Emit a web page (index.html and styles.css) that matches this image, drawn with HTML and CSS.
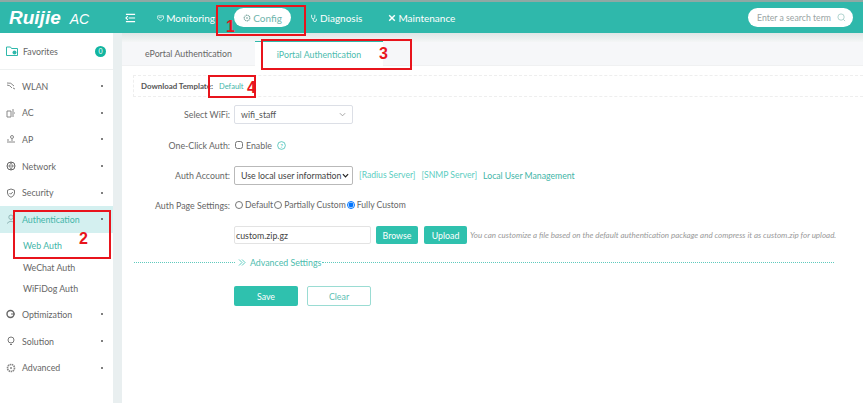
FILE: index.html
```html
<!DOCTYPE html>
<html lang="en">
<head>
    <meta charset="UTF-8">
    <meta name="viewport" content="width=device-width, initial-scale=1.0">
    <title>Ruijie AC - Web Auth</title>
    <link rel="stylesheet" href="styles.css">
</head>
<body>
    <header class="topbar">
        <div class="logo"><span class="logo-name">Ruijie</span><span class="logo-ac">AC</span></div>
        <svg class="menu-icon" viewBox="0 0 12 10"><path d="M1 1h10M4 5h7M1 9h10M3 3L1 5l2 2" fill="none" stroke="#fff" stroke-width="1.2"/></svg>
        <nav class="nav">
            <a class="nav-item nav-monitoring"><svg viewBox="0 0 10 10"><path d="M1 2h8v4l-4 3-4-3zM3 5l1.500-1.500 1 1L7 3" fill="none" stroke="#fff"/></svg>Monitoring</a>
            <a class="nav-item nav-active"><svg viewBox="0 0 10 10"><circle cx="5" cy="5" r="3.500" fill="none" stroke="#7fa8a2" stroke-width="1.500" stroke-dasharray="1.500 .6"/><circle cx="5" cy="5" r="1.200" fill="#9dbdb8"/></svg>Config</a>
            <a class="nav-item nav-diagnosis"><svg viewBox="0 0 10 10"><path d="M2 1v3a2 2 0 0 0 4 0V1M4 6v1.500a2 2 0 0 0 4 0V6" fill="none" stroke="#fff"/></svg>Diagnosis</a>
            <a class="nav-item nav-maintenance"><svg viewBox="0 0 10 10"><path d="M1.500 1.500l7 7M8.500 1.500l-7 7" stroke="#fff" stroke-width="1.800"/></svg>Maintenance</a>
        </nav>
        <div class="search">
            <span>Enter a search term</span>
            <svg viewBox="0 0 10 10"><circle cx="4.500" cy="4.500" r="3.500" fill="none" stroke="#a9cfca"/><path d="M7 7l2 2" stroke="#a9cfca"/></svg>
        </div>
    </header>

    <div class="layout">
        <aside class="sidebar">
            <div class="favorites">
                <svg class="side-icon fav-icon" viewBox="0 0 12 10"><path d="M.5 1h4l1 1.500h6V9.500H.5z" fill="none" stroke="#2fb8ab"/><circle cx="8.500" cy="6.500" r="2" fill="#2fb8ab"/></svg>
                <span>Favorites</span>
                <b class="badge">0</b>
            </div>
            <ul class="menu">
                <li class="menu-item"><svg class="side-icon" viewBox="0 0 10 10"><path d="M1 2q4-1 7 3M1 4q3 0 5 3M7 7l2 1" fill="none" stroke="#888"/></svg>WLAN<i class="dot"></i></li>
                <li class="menu-item"><svg class="side-icon" viewBox="0 0 10 10"><path d="M1 3h4v6H1zM7 1v3M7 6v3M6 5h3" fill="none" stroke="#888"/></svg>AC<i class="dot"></i></li>
                <li class="menu-item"><svg class="side-icon" viewBox="0 0 10 10"><circle cx="6" cy="3" r="1.500" fill="none" stroke="#888"/><path d="M6 5v2M1 8h8M1 6h2" fill="none" stroke="#888"/></svg>AP<i class="dot"></i></li>
                <li class="menu-item"><svg class="side-icon" viewBox="0 0 10 10"><circle cx="5" cy="5" r="4" fill="none" stroke="#666"/><path d="M1 5h8M5 1q-3 4 0 8M5 1q3 4 0 8" fill="none" stroke="#666" stroke-width=".7"/></svg>Network<i class="dot"></i></li>
                <li class="menu-item"><svg class="side-icon" viewBox="0 0 10 10"><path d="M5 1l3.500 1.200V5Q8.500 8 5 9.300 1.500 8 1.500 5V2.200zM3.500 5l1.200 1.200L6.800 4" fill="none" stroke="#777"/></svg>Security<i class="dot"></i></li>
                <li class="menu-item menu-open"><svg class="side-icon" viewBox="0 0 10 10"><circle cx="5" cy="3.200" r="2.200" fill="none" stroke="#8fb5b5"/><path d="M1 9.500q4-4.500 8 0" fill="none" stroke="#8fb5b5"/></svg>Authentication<i class="dot"></i></li>
                <li class="sub-item sub-active">Web Auth</li>
                <li class="sub-item">WeChat Auth</li>
                <li class="sub-item sub-last">WiFiDog Auth</li>
                <li class="menu-item"><svg class="side-icon" viewBox="0 0 10 10"><circle cx="4.500" cy="5" r="3.500" fill="none" stroke="#666" stroke-width="1.400"/><path d="M5 5h4" stroke="#666"/></svg>Optimization<i class="dot"></i></li>
                <li class="menu-item"><svg class="side-icon" viewBox="0 0 10 10"><circle cx="5" cy="4" r="3" fill="none" stroke="#777"/><path d="M4 8.500h2" stroke="#777"/></svg>Solution<i class="dot"></i></li>
                <li class="menu-item"><svg class="side-icon" viewBox="0 0 10 10"><circle cx="5" cy="5" r="3.500" fill="none" stroke="#888" stroke-width="1.600" stroke-dasharray="1.500 .6"/><circle cx="5" cy="5" r="1" fill="#888"/></svg>Advanced<i class="dot"></i></li>
            </ul>
        </aside>

        <main class="content">
            <div class="tabs">
                <div class="tab">ePortal Authentication</div>
                <div class="tab tab-active">iPortal Authentication</div>
            </div>
            <div class="panel">
                <div class="download-bar">
                    <b>Download Template:</b>
                    <a class="link">Default</a>
                </div>

                <div class="form-row row-wifi">
                    <label>Select WiFi:</label>
                    <div class="fake-select">wifi_staff<svg viewBox="0 0 8 5"><path d="M1 1l3 3 3-3" fill="none" stroke="#999"/></svg></div>
                </div>
                <div class="form-row row-oneclick">
                    <label>One-Click Auth:</label>
                    <input type="checkbox" class="check">
                    <span>Enable</span>
                    <svg class="help" viewBox="0 0 10 10"><circle cx="5" cy="5" r="4.300" fill="none" stroke="#2fb8ab" stroke-width=".8"/><text x="5" y="7.400" font-size="6.500" text-anchor="middle" fill="#2fb8ab">?</text></svg>
                </div>
                <div class="form-row row-account">
                    <label>Auth Account:</label>
                    <div class="fake-select account-select">Use local user information<svg viewBox="0 0 8 5"><path d="M1 1l3 3 3-3" fill="none" stroke="#222" stroke-width="1.400"/></svg></div>
                    <a class="link server-link">[Radius Server]</a>
                    <a class="link server-link">[SNMP Server]</a>
                    <a class="link local-link">Local User Management</a>
                </div>
                <div class="form-row row-page">
                    <label>Auth Page Settings:</label>
                    <input type="radio" name="page" class="radio"><span>Default</span>
                    <input type="radio" name="page" class="radio"><span>Partially Custom</span>
                    <input type="radio" name="page" class="radio" checked><span>Fully Custom</span>
                </div>
                <div class="form-row row-file">
                    <label></label>
                    <div class="file-input">custom.zip.gz</div>
                    <button class="btn btn-browse">Browse</button>
                    <button class="btn btn-upload">Upload</button>
                    <em class="hint">You can customize a file based on the default authentication package and compress it as custom.zip for upload.</em>
                </div>

                <div class="advanced">
                    <i class="dots dots-left"></i>
                    <svg viewBox="0 0 8 7"><path d="M1 .5l3 3-3 3M4 .5l3 3-3 3" fill="none" stroke="#35bfb0" stroke-width=".8"/></svg>
                    <span>Advanced Settings</span>
                    <i class="dots dots-right"></i>
                </div>

                <div class="form-row row-actions">
                    <label></label>
                    <button class="btn btn-save">Save</button>
                    <button class="btn btn-clear">Clear</button>
                </div>
            </div>
        </main>
    </div>

    <!-- Red callouts drawn over the screenshot -->
    <div class="callout callout-1"><span>1</span></div>
    <div class="callout callout-2"><span>2</span></div>
    <div class="callout callout-3"><span>3</span></div>
    <div class="callout callout-4"><span>4</span></div>
</body>
</html>
```

FILE: styles.css
```css
* {
    box-sizing: border-box;
}

body {
    margin: 0;
    width: 863px;
    height: 403px;
    overflow: hidden;
    position: relative;
    font-family: Lato, "Open Sans", Arial, sans-serif;
    font-size: 8.8px;
    color: #666;
    background-color: #e9eff0;
}

/* Top bar */
.topbar {
    height: 33px;
    border-top: 2px solid #8fa8a4;
    background-color: #2fb8ab;
    display: flex;
    align-items: center;
    color: #fff;
}

.logo {
    width: 125px;
    padding-left: 9px;
    display: flex;
    align-items: baseline;
    color: #fff;
    font-family: "Liberation Sans", Arial, sans-serif;
    font-style: italic;
}

.logo-name {
    font-size: 19px;
    font-weight: bold;
}

.logo-ac {
    margin-left: 9px;
    font-size: 14px;
}

.menu-icon {
    width: 11px;
    height: 10px;
}

.nav {
    display: flex;
    align-items: center;
    margin-left: 21px;
    font-size: 10px;
}

.nav-item {
    display: flex;
    align-items: center;
    gap: 2px;
    height: 19px;
}

.nav-item svg {
    width: 8px;
    height: 8px;
}

.nav-monitoring {
    width: 58px;
}

.nav-active {
    width: 57px;
    margin-left: 19px;
    justify-content: center;
    border-radius: 10px;
    background-color: #fff;
    color: #6fb5ad;
}

.nav-diagnosis {
    margin-left: 19px;
}

.nav-maintenance {
    margin-left: 26px;
}

.search {
    margin-left: auto;
    margin-right: 10px;
    width: 105px;
    height: 19px;
    padding: 0 7px 0 9px;
    border-radius: 10px;
    background-color: #fff;
    color: #9aa5a4;
    font-size: 8.7px;
    display: flex;
    align-items: center;
    justify-content: space-between;
}

.search svg {
    width: 9px;
    height: 9px;
}

.layout {
    display: flex;
    height: 370px;
}

/* Sidebar */
.sidebar {
    width: 113px;
    flex-shrink: 0;
    background-color: #fff;
}

.favorites {
    height: 37px;
    padding: 0 7px 0 6px;
    display: flex;
    align-items: center;
    border-bottom: 1px solid #eef1f1;
}

.fav-icon {
    width: 12px;
    height: 10px;
    margin-right: 5px;
}

.badge {
    margin-left: auto;
    width: 11px;
    height: 11px;
    line-height: 11px;
    border-radius: 50%;
    background-color: #12b5a0;
    color: #fff;
    font-size: 7px;
    font-weight: normal;
    text-align: center;
}

.menu {
    list-style: none;
    margin: 3px 0 0;
    padding: 0;
}

.menu-item {
    height: 26.6px;
    padding: 0 10px 0 6px;
    display: flex;
    align-items: center;
    color: #666;
}

.side-icon {
    width: 10px;
    height: 10px;
    margin-right: 6px;
    flex-shrink: 0;
}

.fav-icon.side-icon {
    width: 12px;
    margin-right: 5px;
}

.dot {
    margin-left: auto;
    width: 2px;
    height: 2px;
    border-radius: 50%;
    background-color: #555;
}

.menu-open {
    background-color: #d4f0f0;
    color: #3fb5a8;
}

.sub-item {
    height: 21.3px;
    padding-left: 23px;
    display: flex;
    align-items: center;
    color: #666;
}

.sub-active {
    color: #3fb5a8;
    height: 24px;
    padding-top: 2px;
}

.sub-last {
    margin-bottom: 2px;
}

/* Main content */
.content {
    flex: 1;
    min-width: 0;
    margin: 0 0 0 9px;
    padding-top: 9px;
    background: linear-gradient(#dfe6e6, #f4f6f6 9px, #f4f6f6 10px);
}

.tabs {
    height: 24px;
    display: flex;
    background-color: #f6f7f9;
    border-bottom: 1px solid #f0f1f2;
}

.tab {
    height: 23px;
    display: flex;
    align-items: center;
    justify-content: center;
}

.tab:first-child {
    width: 133px;
}

.tab-active {
    width: 128px;
    border-top: 1px solid #2fb8ab;
    margin-top: -1px;
    height: 25px;
    background-color: #fff;
    color: #4cbcae;
}

.panel {
    height: 337px;
    padding: 9px 0 0 11px;
    background-color: #fff;
}

.download-bar {
    height: 22px;
    padding-left: 7px;
    display: flex;
    align-items: center;
    gap: 6px;
    border: 1px dashed #eeeeee;
    border-width: 1px 0 1px 1px;
    font-size: 7.9px;
    color: #555;
}

.download-bar .link {
    font-size: 7.5px;
}

.link {
    color: #3fb5a8;
}

.form-row {
    display: flex;
    align-items: center;
    color: #666;
}

.form-row label {
    width: 97px;
    margin-right: 4px;
    flex-shrink: 0;
    text-align: right;
}

.row-wifi {
    margin-top: 7px;
    height: 20px;
}

.row-oneclick {
    margin-top: 11px;
    height: 20px;
}

.row-account {
    margin-top: 10px;
    height: 20px;
}

.row-page {
    margin-top: 10px;
    height: 20px;
}

.row-file {
    margin-top: 10px;
    height: 20px;
}

.fake-select {
    width: 119px;
    height: 19px;
    padding: 0 6px;
    display: flex;
    align-items: center;
    justify-content: space-between;
    border: 1px solid #dcdfe6;
    border-radius: 2px;
    color: #555;
}

.fake-select svg {
    width: 7px;
    height: 5px;
}

.check {
    width: 8px;
    height: 8px;
    margin: 0 3px 0 1px;
}

.help {
    width: 9px;
    height: 9px;
    margin-left: 5px;
}

.account-select {
    padding: 0 3px 0 6px;
    border-color: #b9b9b9;
    color: #444;
    white-space: nowrap;
}

.server-link {
    margin-left: 6px;
    font-size: 8.6px;
    color: #5ccdbf;
}

.local-link {
    margin-left: 6px;
    font-size: 8.7px;
}

.radio {
    width: 8px;
    height: 8px;
    margin: 0 2px 0 1px;
}

.row-page span {
    font-size: 8.6px;
}

.file-input {
    width: 137px;
    height: 18px;
    padding-left: 1px;
    display: flex;
    align-items: center;
    border: 1px solid #e3e3e3;
    border-radius: 2px;
    color: #444;
}

.btn {
    height: 18px;
    padding: 0;
    border: none;
    border-radius: 2px;
    background-color: #2fc1ae;
    color: #fff;
    font-family: Lato, "Open Sans", Arial, sans-serif;
    font-size: 8.8px;
}

.btn-browse {
    width: 42px;
    margin-left: 5px;
}

.btn-upload {
    width: 43px;
    margin-left: 6px;
}

.hint {
    margin-left: 3px;
    font-size: 8px;
    color: #999;
    white-space: nowrap;
}

.advanced {
    margin-top: 10px;
    height: 14px;
    margin-right: 29px;
    display: flex;
    align-items: center;
    color: #4cbcae;
}

.advanced svg {
    width: 8px;
    height: 7px;
    margin: 0 4px 0 3px;
}

.dots {
    height: 0;
    border-top: 1px dotted #5fcabd;
}

.dots-left {
    width: 101px;
    margin-left: 1px;
}

.dots-right {
    flex: 1;
    margin-left: 1px;
}

.row-actions {
    margin-top: 17px;
}

.btn-save {
    width: 64px;
    height: 20px;
}

.btn-clear {
    width: 64px;
    height: 20px;
    margin-left: 9px;
    background-color: #fff;
    border: 1px solid #9adcd3;
    color: #5cc0b4;
}

/* Callouts */
.callout {
    position: absolute;
    border: 2px solid #e8141c;
}

.callout span {
    position: absolute;
    color: #e8141c;
    font-family: "Liberation Sans", Arial, sans-serif;
    font-size: 16px;
    font-weight: bold;
    line-height: 16px;
}

.callout-1 {
    left: 216px;
    top: 5px;
    width: 90px;
    height: 31px;
}

.callout-1 span {
    left: 8px;
    top: 12px;
}

.callout-2 {
    left: 13px;
    top: 210px;
    width: 98px;
    height: 49px;
}

.callout-2 span {
    left: 64px;
    top: 19px;
}

.callout-3 {
    left: 261px;
    top: 39px;
    width: 151px;
    height: 31px;
}

.callout-3 span {
    left: 116px;
    top: 5px;
}

.callout-4 {
    left: 208px;
    top: 75px;
    width: 48px;
    height: 23px;
}

.callout-4 span {
    left: 37px;
    top: 3px;
}
```
